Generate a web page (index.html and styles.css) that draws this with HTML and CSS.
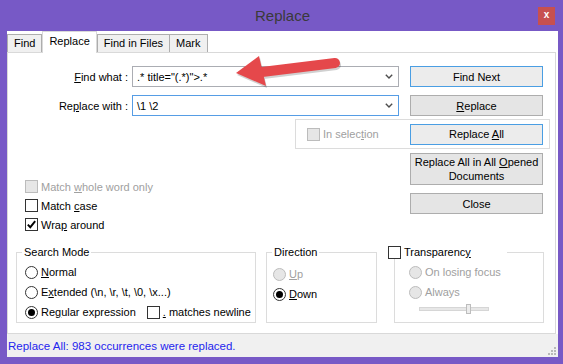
FILE: index.html
```html
<!DOCTYPE html>
<html lang="en">
<head>
  <meta charset="UTF-8" />
  <title>Replace</title>
  <link rel="stylesheet" href="styles.css">
</head>
<body>
  <div class="window">
    <div class="titlebar">
      <span></span>
      <div class="title">Replace</div>
      <div class="close">x</div>
    </div>

    <div class="client">
      <div class="tabs">
        <div class="tab">Find</div>
        <div class="tab active">Replace</div>
        <div class="tab">Find in Files</div>
        <div class="tab">Mark</div>
      </div>

      <div class="panel">
        <div class="find-rows">
          <div class="field-row">
            <label class="field-label"><u>F</u>ind what :</label>
            <div class="combo">
              <span class="combo-text">.* title="(.*)"&gt;.*</span>
              <svg class="chevron" width="8" height="5" viewBox="0 0 8 5"><path d="M0.8 0.8 L4 4 L7.2 0.8" fill="none" stroke="#4d4d4d" stroke-width="1.4"/></svg>
            </div>
            <button class="btn default">Find Next</button>
          </div>
          <div class="field-row">
            <label class="field-label">Re<u>p</u>lace with :</label>
            <div class="combo focused">
              <span class="combo-text">\1 \2</span>
              <svg class="chevron" width="8" height="5" viewBox="0 0 8 5"><path d="M0.8 0.8 L4 4 L7.2 0.8" fill="none" stroke="#4d4d4d" stroke-width="1.4"/></svg>
            </div>
            <button class="btn"><u>R</u>eplace</button>
          </div>
        </div>

        <div class="selection-box">
          <span class="check disabled"><span class="box"></span><span>In selec<u>t</u>ion</span></span>
          <button class="btn default">Replace <u>A</u>ll</button>
        </div>

        <div class="lower">
          <div class="options">
            <div class="check disabled"><span class="box"></span><span>Match <u>w</u>hole word only</span></div>
            <div class="check"><span class="box"></span><span>Match <u>c</u>ase</span></div>
            <div class="check">
              <span class="box"><svg width="11" height="11" viewBox="0 0 11 11"><path d="M1.8 5.6 L4.3 8.2 L9.2 2.2" fill="none" stroke="#000" stroke-width="1.9"/></svg></span>
              <span>Wra<u>p</u> around</span>
            </div>
          </div>
          <div class="buttons">
            <button class="btn tall">Replace All in All <u>O</u>pened<br>Documents</button>
            <button class="btn">Close</button>
          </div>
        </div>

        <div class="groups">
          <fieldset class="group search-mode">
            <legend>Search Mode</legend>
            <div class="group-body">
              <div class="radio"><span class="dot"></span><span><u>N</u>ormal</span></div>
              <div class="radio"><span class="dot"></span><span>E<u>x</u>tended (\n, \r, \t, \0, \x...)</span></div>
              <div class="radio on">
                <span class="dot"></span><span>Re<u>g</u>ular expression</span>
                <span class="check newline"><span class="box"></span><span><u>.</u> matches newline</span></span>
              </div>
            </div>
          </fieldset>

          <fieldset class="group direction">
            <legend>Direction</legend>
            <div class="group-body">
              <div class="radio disabled"><span class="dot"></span><span><u>U</u>p</span></div>
              <div class="radio on"><span class="dot"></span><span><u>D</u>own</span></div>
            </div>
          </fieldset>

          <fieldset class="group transparency">
            <legend><span class="check"><span class="box"></span><span>Transparenc<u>y</u></span></span></legend>
            <div class="group-body">
              <div class="radio disabled"><span class="dot"></span><span>On losing focus</span></div>
              <div class="radio disabled"><span class="dot"></span><span>Always</span></div>
              <div class="slider"><span class="thumb"></span></div>
            </div>
          </fieldset>
        </div>
      </div>

      <div class="statusbar">
        <span class="status-text">Replace All: 983 occurrences were replaced.</span>
        <svg class="grip" width="10" height="10" viewBox="0 0 10 10" fill="#b8b8b8">
          <rect x="7" y="1" width="2" height="2"/>
          <rect x="4" y="4" width="2" height="2"/><rect x="7" y="4" width="2" height="2"/>
          <rect x="1" y="7" width="2" height="2"/><rect x="4" y="7" width="2" height="2"/><rect x="7" y="7" width="2" height="2"/>
        </svg>
      </div>
    </div>

    <!-- red annotation arrow pointing at the Find what box -->
    <svg class="arrow" width="115" height="42" viewBox="230 50 115 42">
      <g fill="#000" stroke="#000" opacity="0.18" transform="translate(1 2)">
        <line x1="262" y1="72" x2="335" y2="63" stroke-width="10" stroke-linecap="round"/>
        <polygon points="236,73 259,56 266,86" stroke="none"/>
      </g>
      <line x1="262" y1="72" x2="335" y2="63" stroke="#e5484b" stroke-width="10" stroke-linecap="round"/>
      <polygon points="236,73 259,56 266,86" fill="#e5484b"/>
    </svg>
  </div>
</body>
</html>
```

FILE: styles.css
```css
* {
  box-sizing: border-box;
}
body {
  margin: 0;
  font-family: "Segoe UI", "Liberation Sans", Arial, sans-serif;
  font-size: 11px;
  color: #000;
}
u {
  text-decoration-thickness: 1px;
}
.window {
  position: relative;
  width: 563px;
  height: 364px;
  background-color: #7759c6;
  padding: 0 5px 7px 7px;
  display: flex;
  flex-direction: column;
}
.titlebar {
  height: 31px;
  display: grid;
  grid-template-columns: 1fr auto 1fr;
}
.title {
  font-size: 15px;
  line-height: 31px;
  color: #3a3a3a;
}
.close {
  justify-self: end;
  width: 17px;
  height: 18px;
  margin: 7px 3px 0 0;
  background-color: #c75050;
  color: #fff;
  font-weight: bold;
  font-size: 10px;
  line-height: 16px;
  text-align: center;
}
.client {
  flex: 1;
  background-color: #fff;
  display: flex;
  flex-direction: column;
}

/* tabs */
.tabs {
  display: flex;
  align-items: flex-end;
  height: 21px;
}
.tab {
  height: 18px;
  padding: 0 6px;
  border: 1px solid #adadad;
  border-bottom: none;
  background-color: #f0f0f0;
  line-height: 17px;
}
.tab + .tab {
  border-left: none;
}
.tab.active {
  position: relative;
  z-index: 1;
  height: 22px;
  margin-bottom: -1px;
  padding: 0 6px;
  background-color: #fff;
  border: 1px solid #d9d9d9;
  border-bottom: none;
  line-height: 18px;
}
.tab.active + .tab {
  border-left: 1px solid #adadad;
}

/* main panel */
.panel {
  flex: 1;
  margin-right: 2px;
  border: 1px solid #d9d9d9;
  padding-top: 13px;
  display: flex;
  flex-direction: column;
}
.find-rows {
  display: flex;
  flex-direction: column;
  gap: 8px;
  margin-bottom: 3px;
}
.field-row {
  display: flex;
  align-items: center;
  height: 21px;
}
.field-label {
  width: 120px;
  margin-right: 4px;
  text-align: right;
}
.combo {
  width: 267px;
  height: 21px;
  border: 1px solid #abadb3;
  padding: 0 5px 0 4px;
  display: flex;
  align-items: center;
  justify-content: space-between;
}
.combo.focused {
  border-color: #569de5;
}
.btn {
  width: 133px;
  height: 21px;
  margin: 0 0 0 11px;
  padding: 0;
  border: 1px solid #adadad;
  background-color: #e5e5e5;
  font: inherit;
  color: #000;
  line-height: 14px;
}
.btn.default {
  border-color: #4a9ee3;
  background-color: #ececec;
}
.btn.tall {
  height: 32px;
}
.selection-box {
  align-self: flex-end;
  width: 255px;
  height: 30px;
  margin-right: 5px;
  border: 1px solid #dcdcdc;
  padding: 0 6px 0 11px;
  display: flex;
  align-items: center;
  justify-content: space-between;
}
.selection-box .btn {
  margin: 0;
}

/* checkboxes and radios */
.check,
.radio {
  display: flex;
  align-items: center;
  white-space: nowrap;
}
.box,
.dot {
  flex: none;
  width: 13px;
  height: 13px;
  margin-right: 3px;
  border: 1px solid #333;
  background-color: #fff;
  display: flex;
  align-items: center;
  justify-content: center;
}
.dot {
  border-radius: 50%;
}
.radio.on .dot::after {
  content: "";
  width: 7px;
  height: 7px;
  border-radius: 50%;
  background-color: #000;
}
.disabled {
  color: #a0a0a0;
}
.disabled .box,
.disabled .dot {
  border-color: #bcbcbc;
  background-color: #e6e6e6;
}
.lower {
  display: flex;
  justify-content: space-between;
  margin-top: 4px;
}
.options {
  padding: 24px 0 0 17px;
}
.options .check {
  height: 19px;
}
.buttons {
  display: flex;
  flex-direction: column;
  gap: 8px;
  margin-right: 12px;
}
.buttons .btn {
  margin: 0;
}

/* group boxes */
.groups {
  display: flex;
  margin-top: 11px;
  padding-left: 8px;
}
.group {
  margin: 0;
  padding: 0;
  min-width: 0;
  height: 78px;
  border: 1px solid #dcdcdc;
}
.group legend {
  margin-left: 5px;
  padding: 0 2px;
  line-height: 14px;
}
.search-mode {
  width: 240px;
}
.direction {
  width: 111px;
  margin-left: 10px;
}
.transparency {
  width: 150px;
  margin-left: 17px;
}
.transparency legend {
  margin-left: -9px;
  padding-right: 36px;
}
.group-body {
  padding: 3px 0 0 8px;
}
.direction .group-body {
  padding: 5px 0 0 6px;
}
.transparency .group-body {
  padding-left: 14px;
}
.group-body .radio {
  height: 20px;
}
.newline {
  margin-left: 11px;
}
.slider {
  position: relative;
  width: 70px;
  height: 4px;
  margin: 5px 0 0 10px;
  border: 1px solid #d6d6d6;
  background-color: #e7e7e7;
}
.thumb {
  position: absolute;
  left: 46px;
  top: -4px;
  width: 5px;
  height: 10px;
  border: 1px solid #bdbdbd;
  background-color: #ececec;
}

/* status bar */
.statusbar {
  height: 23px;
  background-color: #f0f0f0;
  padding-left: 1px;
  display: flex;
  align-items: center;
  color: #2424ee;
  font-size: 11.5px;
}
.grip {
  margin: auto 1px 1px auto;
}
.arrow {
  position: absolute;
  left: 230px;
  top: 50px;
  pointer-events: none;
}
```
